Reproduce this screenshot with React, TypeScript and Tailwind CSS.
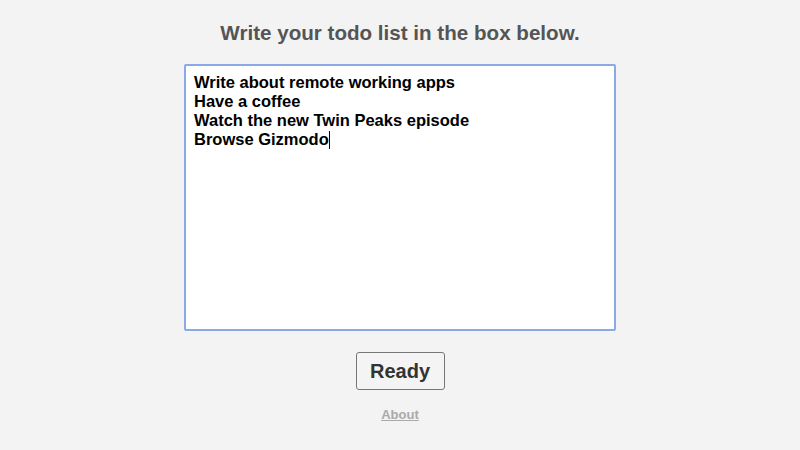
const todos = [
  'Write about remote working apps',
  'Have a coffee',
  'Watch the new Twin Peaks episode',
  'Browse Gizmodo',
];

export default function App() {
  return (
    <div className="min-h-screen w-full bg-[#f3f3f3] flex flex-col items-center font-['Liberation_Sans',Arial,sans-serif]">
      <h1 className="mt-[21px] text-[20.6px] leading-[24px] font-bold text-[#555555]">
        Write your todo list in the box below.
      </h1>

      <div className="mt-[19px] w-[432px] h-[267px] bg-white border-2 border-[#8aa9e6] rounded-[2px] px-[8px] pt-[7px]">
        {todos.map((todo, i) => (
          <div key={todo} className="text-[16.5px] leading-[19px] font-bold text-black">
            {todo}
            {i === todos.length - 1 && (
              <span className="inline-block w-px h-[18px] bg-black align-[-4px]" />
            )}
          </div>
        ))}
      </div>

      <button className="mt-[21px] w-[89px] h-[38px] bg-[#f4f4f4] border border-[#777777] rounded-[3px] text-[20px] font-bold text-[#333333]">
        Ready
      </button>

      <a href="#" className="mt-[15px] text-[13px] font-bold text-[#aaaaaa] underline">
        About
      </a>
    </div>
  );
}
